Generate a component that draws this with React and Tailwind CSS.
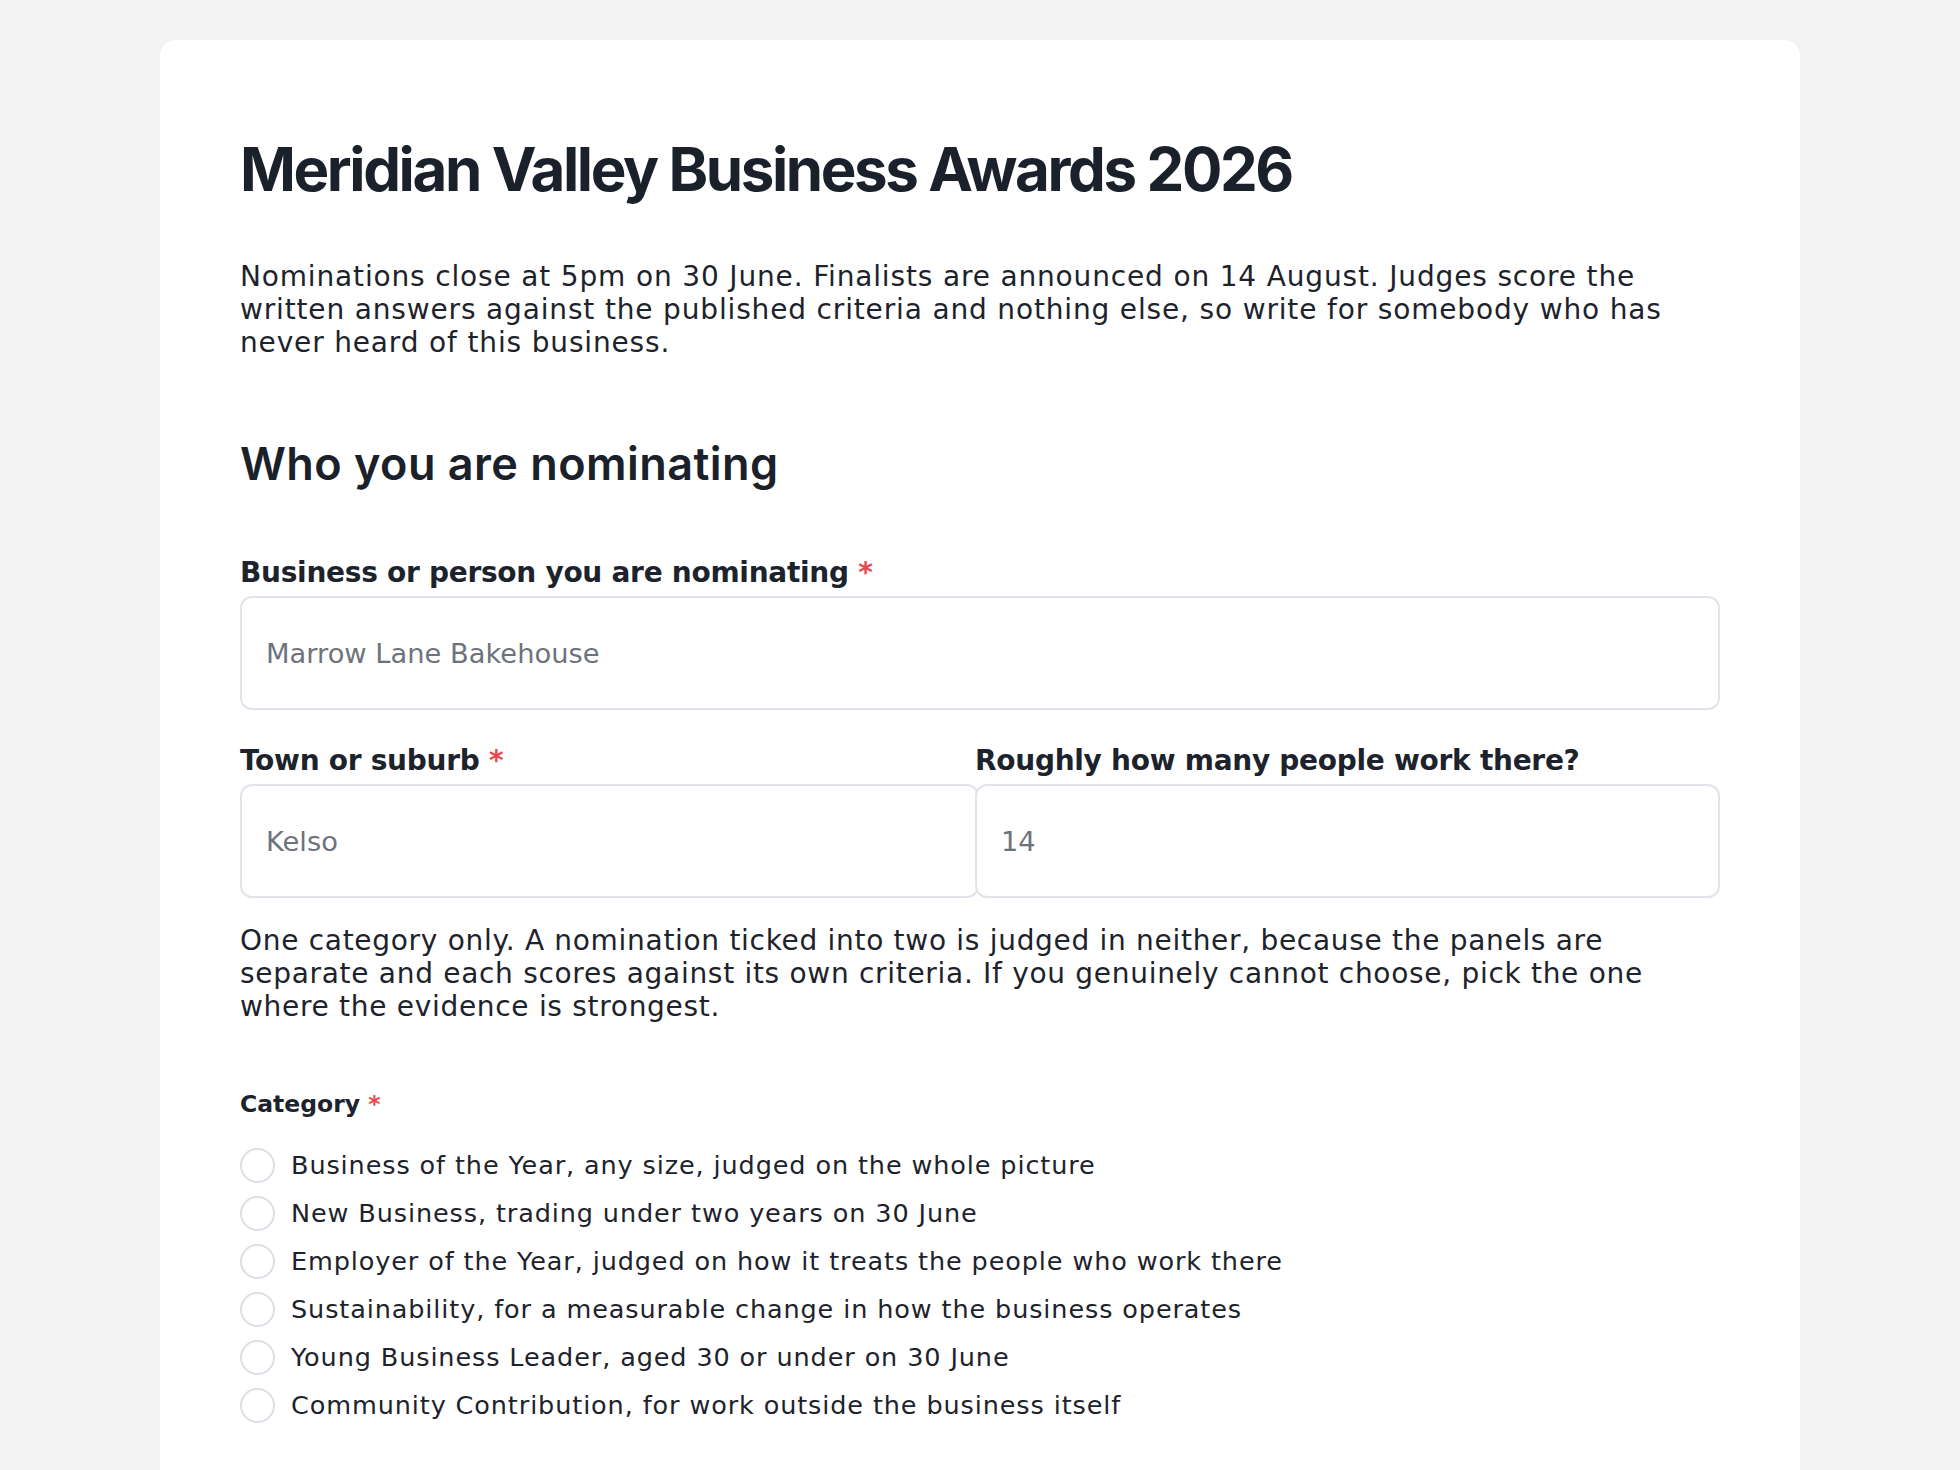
import React from 'react';

const categories = [
  'Business of the Year, any size, judged on the whole picture',
  'New Business, trading under two years on 30 June',
  'Employer of the Year, judged on how it treats the people who work there',
  'Sustainability, for a measurable change in how the business operates',
  'Young Business Leader, aged 30 or under on 30 June',
  'Community Contribution, for work outside the business itself',
];

const Required = () => <span className="text-[#e5484d]"> *</span>;

const TextField = ({ placeholder, className = '' }) => (
  <input
    type="text"
    placeholder={placeholder}
    className={`block h-[114px] rounded-xl border-2 border-[#e0e4ea] bg-white px-6 text-[27.3px] text-[#1e242c] outline-none placeholder:text-[#6e737b] ${className}`}
  />
);

const App = () => {
  return (
    <div className="min-h-screen bg-[#f3f3f3] pt-10 font-['DejaVu_Sans',sans-serif] text-[#1d232c]">
      <div className="mx-auto w-[1640px] rounded-2xl bg-white px-20 pt-[93px] pb-20">
        <h1 className="font-['Inter',sans-serif] text-[60px] leading-[72px] font-bold tracking-[-0.04em] text-[#1b212a]">
          Meridian Valley Business Awards 2026
        </h1>
        <p className="mt-[55px] text-[28px] leading-[33px] tracking-[0.03em]">
          Nominations close at 5pm on 30 June. Finalists are announced on 14 August. Judges score the written answers
          against the published criteria and nothing else, so write for somebody who has never heard of this business.
        </p>

        <h2 className="mt-[78px] font-['Inter',sans-serif] text-[45px] leading-[54px] font-semibold tracking-[0.01em] text-[#1b212a]">
          Who you are nominating
        </h2>

        <label className="mt-[65px] block text-[28px] leading-[34px] font-bold tracking-[-0.01em]">
          Business or person you are nominating
          <Required />
        </label>
        <TextField placeholder="Marrow Lane Bakehouse" className="mt-[6px] w-full" />

        <div className="mt-[34px] grid grid-cols-[735px_1fr]">
          <div>
            <label className="block text-[28px] leading-[34px] font-bold tracking-[-0.01em]">
              Town or suburb
              <Required />
            </label>
            <TextField placeholder="Kelso" className="mt-[6px] w-[739px]" />
          </div>
          <div>
            <label className="block text-[28px] leading-[34px] font-bold tracking-[-0.01em]">
              Roughly how many people work there?
            </label>
            <TextField placeholder="14" className="mt-[6px] w-full" />
          </div>
        </div>

        <p className="mt-[26px] text-[28px] leading-[33px] tracking-[0.025em]">
          One category only. A nomination ticked into two is judged in neither, because the panels are separate and each
          scores against its own criteria. If you genuinely cannot choose, pick the one where the evidence is strongest.
        </p>

        <fieldset className="mt-[66px]">
          <legend className="block text-[23.5px] leading-[30px] font-bold">
            Category
            <Required />
          </legend>
          <div className="mt-[22px] flex flex-col">
            {categories.map((c) => (
              <label key={c} className="flex h-12 items-center gap-4">
                <input
                  type="radio"
                  name="category"
                  className="h-[35px] w-[35px] shrink-0 appearance-none rounded-full border-2 border-[#dadfe5] bg-white"
                />
                <span className="text-[25.5px] leading-[48px] tracking-[0.035em]">{c}</span>
              </label>
            ))}
          </div>
        </fieldset>
      </div>
    </div>
  );
};

export default App;
